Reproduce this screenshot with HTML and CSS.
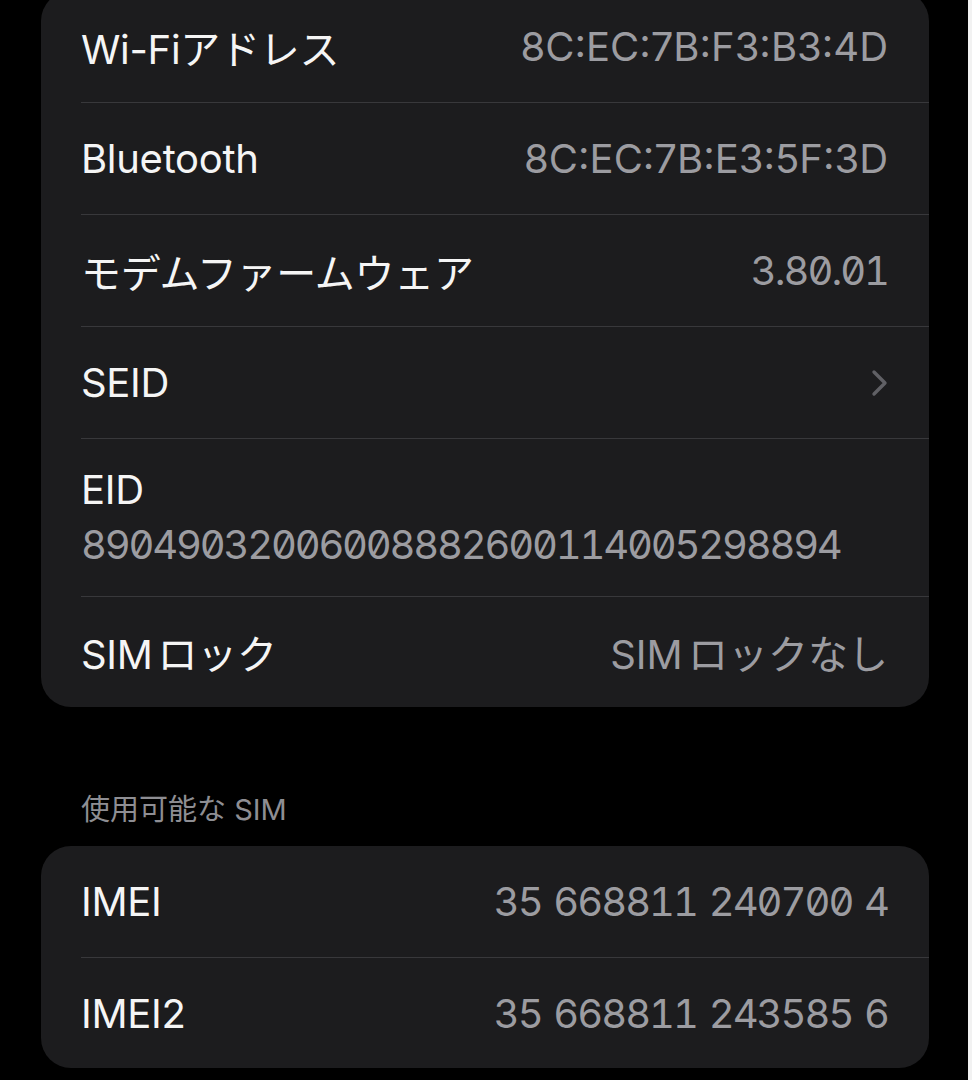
FILE: index.html
```
<!DOCTYPE html>
<html lang="ja">
<head>
  <meta charset="UTF-8" />
  <meta name="viewport" content="width=device-width, initial-scale=1.0"/>
  <title>情報</title>
  <link rel="stylesheet" href="styles.css">
</head>
<body>

<div class="tela">

  <div class="grupo grupo-topo">
    <div class="linha">
      <span class="rotulo">Wi-Fiアドレス</span>
      <span class="valor">8C:EC:7B:F3:B3:4D</span>
    </div>
    <div class="linha">
      <span class="rotulo">Bluetooth</span>
      <span class="valor">8C:EC:7B:E3:5F:3D</span>
    </div>
    <div class="linha">
      <span class="rotulo">モデムファームウェア</span>
      <span class="valor numero">3.80.01</span>
    </div>
    <div class="linha">
      <span class="rotulo">SEID</span>
      <svg class="seta" width="18" height="28" viewBox="0 0 18 28">
        <polyline points="3,3 14,14 3,25" fill="none" stroke="#606065" stroke-width="3.4" stroke-linecap="round" stroke-linejoin="round"/>
      </svg>
    </div>
    <div class="linha linha-eid">
      <span class="rotulo">EID</span>
      <span class="valor numero">89049032006008882600114005298894</span>
    </div>
    <div class="linha">
      <span class="rotulo">SIM ロック</span>
      <span class="valor">SIM ロックなし</span>
    </div>
  </div>

  <div class="cabecalho">使用可能な SIM</div>

  <div class="grupo">
    <div class="linha">
      <span class="rotulo">IMEI</span>
      <span class="valor numero">35 668811 240700 4</span>
    </div>
    <div class="linha">
      <span class="rotulo">IMEI2</span>
      <span class="valor numero">35 668811 243585 6</span>
    </div>
  </div>

</div>

</body>
</html>
```

FILE: styles.css
```
html {
  background-color: #f2f2f2;
}

body {
  margin: 0;
  font-family: Inter, "Noto Sans CJK JP", sans-serif;
  color: #f5f5f5;
}

.tela {
  width: 968px;
  height: 1080px;
  background-color: #000;
  overflow: hidden;
  padding-left: 41px;
  box-sizing: border-box;
}

.grupo {
  width: 888px;
  background-color: #1c1c1e;
  border-radius: 30px;
  padding-left: 40px;
  box-sizing: border-box;
}

.grupo-topo {
  margin-top: -9px;
}

.linha {
  display: flex;
  justify-content: space-between;
  align-items: center;
  height: 112px;
  padding-right: 41px;
  border-bottom: 1px solid #38383b;
  box-sizing: border-box;
}

.linha:last-child {
  border-bottom: none;
  height: 110px;
}

.rotulo {
  font-size: 40px;
  letter-spacing: -0.3px;
  word-spacing: -6px;
}

.valor {
  font-size: 40px;
  color: #9c9ca1;
  word-spacing: -6px;
}

.numero {
  font-feature-settings: "zero", "tnum";
  letter-spacing: -2px;
  word-spacing: 3px;
}

.seta {
  display: block;
  margin-right: -1px;
}

.linha-eid {
  flex-direction: column;
  align-items: flex-start;
  justify-content: flex-start;
  height: 158px;
  padding-top: 28px;
}

.linha-eid .rotulo {
  line-height: 46px;
}

.linha-eid .valor {
  line-height: 64px;
  letter-spacing: -2.2px;
}

.cabecalho {
  font-size: 29px;
  line-height: 34px;
  color: #8e8e93;
  padding: 86px 0 19px 40px;
}
```
